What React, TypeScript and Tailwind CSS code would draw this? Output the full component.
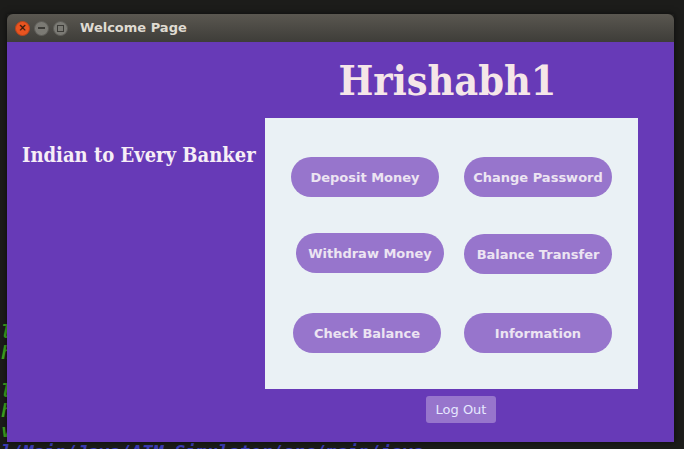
import React from "react";

const btn =
  "h-[40px] w-[148px] rounded-full bg-[#9775cc] text-[13px] font-bold text-[#ece4f2] flex items-center justify-center pt-[1px]";

const serifC = { fontFamily: '"DejaVu Serif Condensed", "DejaVu Serif", serif' };

export default function App() {
  return (
    <div
      className="relative w-[684px] h-[449px] overflow-hidden bg-[#1c1c1a]"
      style={{ fontFamily: '"DejaVu Sans", sans-serif' }}
    >
      {/* terminal behind the window */}
      <div className="flex flex-col pt-[322px] pl-[1px] text-[18px] leading-[20px] italic font-bold text-[#3fa51f]" style={{ fontFamily: '"DejaVu Sans Mono", monospace' }}>
        <div className="h-[21px]">l</div>
        <div className="h-[38px]">h</div>
        <div className="h-[20px]">l</div>
        <div className="h-[20px]">h</div>
        <div className="h-[21px]">v</div>
        <div className="text-[#3d3db8] whitespace-nowrap">l/Main/Java/ATM-Simulator/src/main/java</div>
      </div>

      {/* window */}
      <div className="absolute left-[7px] top-[14px] w-[667px] flex flex-col shadow-[0_0_6px_rgba(0,0,0,0.6)]">
        {/* title bar */}
        <div className="h-[28px] rounded-t-[6px] bg-gradient-to-b from-[#5a5750] to-[#3e3d39] flex items-center pl-[8px]">
          <div className="w-[15px] h-[15px] rounded-full bg-[#e95420] flex items-center justify-center text-[#3a1a0c] text-[10px] leading-none font-bold border border-[#b9441b]">
            ×
          </div>
          <div className="ml-[4px] w-[15px] h-[15px] rounded-full bg-[#7b7a74] border border-[#5d5c57] flex items-center justify-center">
            <div className="w-[7px] h-[1.5px] bg-[#3c3b37]" />
          </div>
          <div className="ml-[4px] w-[15px] h-[15px] rounded-full bg-[#7b7a74] border border-[#5d5c57] flex items-center justify-center">
            <div className="w-[7px] h-[7px] border border-[#3c3b37]" />
          </div>
          <div className="ml-[12px] text-[13px] font-bold text-[#dfdbd2]">Welcome Page</div>
        </div>

        {/* content */}
        <div className="h-[400px] bg-[#673ab7] flex" style={{ fontFamily: '"DejaVu Sans", sans-serif' }}>
          <div className="w-[258px] pl-[15px] pt-[98px]">
            <div
              className="text-[20px] font-bold font-stretch-condensed text-[#f6eef6] whitespace-nowrap"
              style={serifC}
            >
              Indian to Every Banker
            </div>
          </div>
          <div className="w-[373px] flex flex-col">
            <div className="h-[76px] flex items-center justify-center pr-[8px]">
              <div
                className="text-[41px] font-bold font-stretch-condensed text-[#f5e6e8] leading-none pt-[2px]"
                style={serifC}
              >
                Hrishabh1
              </div>
            </div>
            <div className="h-[271px] bg-[#eaf1f5] pl-[26px] pt-[39px] flex flex-col">
              <div className="flex">
                <div className={btn}>Deposit Money</div>
                <div className={btn + " ml-[25px]"}>Change Password</div>
              </div>
              <div className="flex mt-[36px]">
                <div className={btn + " ml-[5px]"}>Withdraw Money</div>
                <div className={btn + " ml-[20px] mt-[1px]"}>Balance Transfer</div>
              </div>
              <div className="flex mt-[39px]">
                <div className={btn + " ml-[2px]"}>Check Balance</div>
                <div className={btn + " ml-[23px]"}>Information</div>
              </div>
            </div>
            <div className="flex pl-[161px] pt-[7px]">
              <div className="w-[70px] h-[27px] rounded-[3px] bg-[#9775cc] text-[13px] text-[#e6e8ff] flex items-center justify-center">
                Log Out
              </div>
            </div>
          </div>
        </div>
      </div>
    </div>
  );
}
